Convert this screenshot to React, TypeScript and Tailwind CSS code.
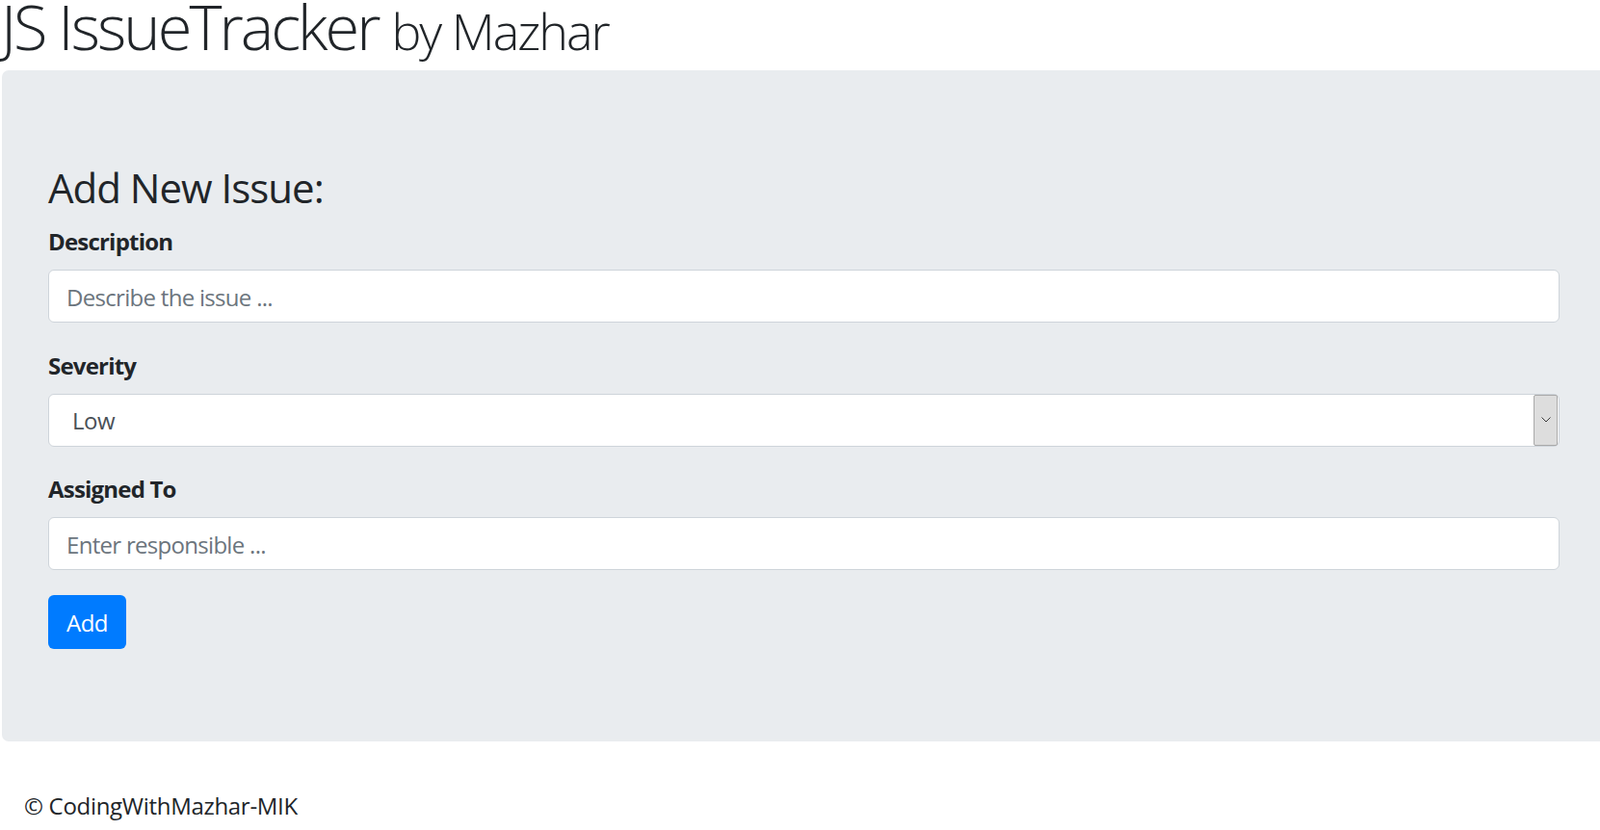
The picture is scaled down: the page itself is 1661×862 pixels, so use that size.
import React from "react";

const font = { fontFamily: "'Open Sans', 'Noto Sans', sans-serif" };

function Field({ label, children }: { label: string; children: React.ReactNode }) {
  return (
    <div className="mb-[25.5px]">
      <label className="block text-[24px] font-bold leading-[36px] pt-[1px] mb-[11px] tracking-[-0.8px] text-[#212529]">{label}</label>
      {children}
    </div>
  );
}

export default function App() {
  return (
    <div className="min-h-[862px] bg-white text-[#212529] overflow-hidden" style={font}>
      <h1 className="h-[73px] m-0 pl-[1px] leading-[54px] whitespace-nowrap text-[65px] font-light tracking-[-3px] text-[#212529]">
        JS IssueTracker <span className="text-[52px] font-light tracking-[-2px]">by Mazhar</span>
      </h1>
      <div className="ml-[2px] rounded-l-[7px] bg-[#e9ecef] pt-[96px] pb-[96px] pl-[48px] pr-[42px]">
        <h3 className="text-[42px] leading-[50px] pt-[1px] font-normal mb-[12px] tracking-[-1px] text-[#212529]">Add New Issue:</h3>
        <form onSubmit={(e) => e.preventDefault()}>
          <Field label="Description">
            <input
              type="text"
              placeholder="Describe the issue ..."
              className="block w-full h-[55px] rounded-[6px] border border-[#ced4da] bg-white px-[18px] pt-[2px] text-[24px] tracking-[-0.7px] text-[#495057] placeholder:text-[#6c757d] outline-none"
            />
          </Field>
          <Field label="Severity">
            <div className="flex h-[55px] w-full items-stretch rounded-[6px] border border-[#ced4da] bg-white pr-[1px]">
              <select className="flex-1 appearance-none bg-transparent pl-[24px] pt-[2px] text-[24px] tracking-[-0.5px] text-[#495057] outline-none">
                <option>Low</option>
                <option>Medium</option>
                <option>High</option>
              </select>
              <div className="flex w-[25px] items-center justify-center rounded-[2px] border border-[#a9a9a9] bg-[#dddddd]">
                <svg width="10" height="6" viewBox="0 0 10 6" fill="none">
                  <path d="M0.5 0.5 L5 5 L9.5 0.5" stroke="#3a3a3a" strokeWidth="1" />
                </svg>
              </div>
            </div>
          </Field>
          <Field label="Assigned To">
            <input
              type="text"
              placeholder="Enter responsible ..."
              className="block w-full h-[55px] rounded-[6px] border border-[#ced4da] bg-white px-[18px] pt-[2px] text-[24px] tracking-[-0.7px] text-[#495057] placeholder:text-[#6c757d] outline-none"
            />
          </Field>
          <button
            type="submit"
            className="h-[56px] rounded-[6px] bg-[#007bff] px-[19px] pt-[2px] text-[24px] leading-[36px] tracking-[-0.5px] text-white"
          >
            Add
          </button>
        </form>
      </div>
      <footer className="mt-[48px] pl-[25px] pt-[1px] text-[24px] leading-[36px] tracking-[-0.3px] text-[#212529]">
        © CodingWithMazhar-MIK
      </footer>
    </div>
  );
}
